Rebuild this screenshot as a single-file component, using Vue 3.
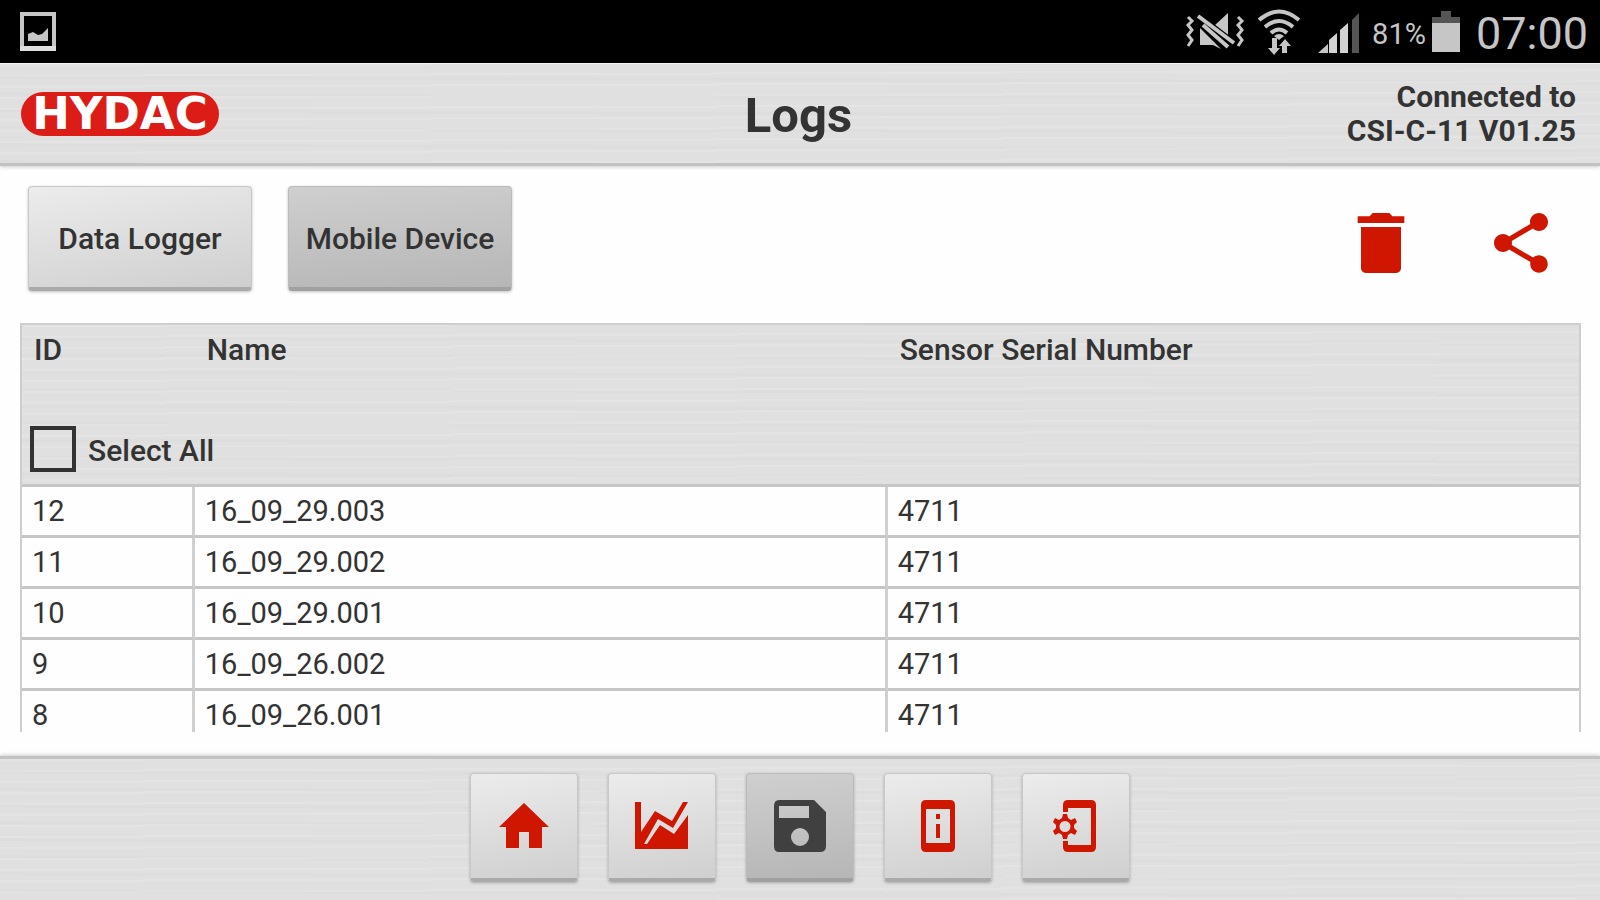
<template>
  <div class="app">
    <div class="status-bar">
      <svg class="status-photo" width="36" height="40" viewBox="0 0 36 40">
        <rect x="2" y="2" width="32" height="35" fill="none" stroke="#c6c6c6" stroke-width="4" />
        <path d="M0 34h36v5H0z" fill="#dedede" />
        <path d="M8 22l5-2 5 3 4-1 6-6v13H8z" fill="#c6c6c6" />
      </svg>
      <div class="status-right">
        <svg class="status-mute" width="60" height="40" viewBox="0 0 60 40">
          <g fill="none" stroke="#c6c6c6" stroke-width="3">
            <path d="M2 5l4 4-4 4 4 5-4 5 4 5-4 6" />
            <path d="M52 5l4 4-4 4 4 5-4 5 4 5-4 6" />
          </g>
          <path d="M14 16l21 21V37L27 33H14zM29 13L42 1v24z" fill="#c6c6c6" />
          <path d="M12 5l37 28" stroke="#000" stroke-width="8" />
          <path d="M12 4l36 27M17 13l25 22" stroke="#c6c6c6" stroke-width="4" />
        </svg>
        <svg class="status-wifi" width="42" height="46" viewBox="0 0 42 46">
          <g fill="none" stroke="#c6c6c6" stroke-width="4">
            <path d="M1 11Q21-6 41 11" />
            <path d="M7 18Q21 6 35 18" />
            <path d="M13 24Q21 17 29 24" />
          </g>
          <path d="M16 27q5-4 10 0l-5 4z" fill="#c6c6c6" />
          <path d="M14 29h5v10h3l-6 7-6-7h4zM24 44V37h-3l6-7 6 7h-4v7z" fill="#c6c6c6" />
        </svg>
        <svg class="status-signal" width="42" height="42" viewBox="0 0 42 42">
          <path d="M0 40l10-9v9z" fill="#c6c6c6" />
          <path d="M11 27l8-7v20h-8zM22 17l8-7v30h-8z" fill="#d2d2d2" />
          <path d="M34 7l7-7v40h-7z" fill="#555" />
        </svg>
        <span class="status-percent">81%</span>
        <svg class="status-battery" width="28" height="42" viewBox="0 0 28 42">
          <path d="M9 0h10v6h9v7H0V6h9z" fill="#555" />
          <path d="M0 12h28v29H0z" fill="#c6c6c6" />
        </svg>
        <span class="status-time">07:00</span>
      </div>
    </div>

    <header class="header metal">
      <div class="header-side">
        <div class="logo">HYDAC</div>
      </div>
      <h1 class="title">Logs</h1>
      <div class="header-side connection">
        Connected to<br />
        CSI-C-11 V01.25
      </div>
    </header>

    <main class="content">
      <div class="toolbar">
        <button
          v-for="source in sources"
          :key="source"
          type="button"
          class="btn source-btn"
          :class="{ active: source === activeSource }"
          @click="activeSource = source"
        >
          {{ source }}
        </button>
        <div class="actions">
          <button type="button" class="icon-btn" aria-label="Delete">
            <svg width="80" height="80" viewBox="0 0 24 24">
              <path d="M6 19.6c0 .8.6 1.4 1.4 1.4h9.2c.8 0 1.4-.6 1.4-1.4V7.2H6zM19 4h-3.6l-.9-1h-5l-.9 1H5v2h14z" />
            </svg>
          </button>
          <button type="button" class="icon-btn" aria-label="Share">
            <svg width="72" height="72" viewBox="0 0 24 24">
              <path d="M18 16.08c-.76 0-1.44.3-1.96.77L8.91 12.7c.05-.23.09-.46.09-.7s-.04-.47-.09-.7l7.05-4.11c.54.5 1.25.81 2.04.81 1.66 0 3-1.34 3-3s-1.34-3-3-3-3 1.34-3 3c0 .24.04.47.09.7L8.04 9.81C7.5 9.31 6.79 9 6 9c-1.66 0-3 1.34-3 3s1.34 3 3 3c.79 0 1.5-.31 2.04-.81l7.12 4.16c-.05.21-.08.43-.08.65 0 1.61 1.31 2.92 2.92 2.92 1.61 0 2.92-1.31 2.92-2.92s-1.31-2.92-2.92-2.92z" />
            </svg>
          </button>
        </div>
      </div>

      <div class="table-wrap">
        <table class="log-table">
          <colgroup>
            <col class="col-id" />
            <col class="col-name" />
            <col class="col-serial" />
          </colgroup>
          <thead class="metal">
            <tr class="head-row">
              <th scope="col">ID</th>
              <th scope="col">Name</th>
              <th scope="col">Sensor Serial Number</th>
            </tr>
            <tr class="select-row">
              <th colspan="3">
                <label class="select-all">
                  <input v-model="selectAll" type="checkbox" />
                  <span>Select All</span>
                </label>
              </th>
            </tr>
          </thead>
          <tbody>
            <tr v-for="log in logs" :key="log.id">
              <td>{{ log.id }}</td>
              <td>{{ log.name }}</td>
              <td>{{ log.serial }}</td>
            </tr>
          </tbody>
        </table>
      </div>
    </main>

    <nav class="footer metal">
      <button
        v-for="tab in tabs"
        :key="tab.name"
        type="button"
        class="btn tab-btn"
        :class="{ active: tab.name === activeTab }"
        :aria-label="tab.name"
        @click="activeTab = tab.name"
      >
        <svg width="64" height="64" viewBox="0 0 64 64">
          <path :d="tab.icon" fill-rule="evenodd" />
        </svg>
      </button>
    </nav>
  </div>
</template>

<script setup>
import { ref } from 'vue'

const sources = ['Data Logger', 'Mobile Device']
const activeSource = ref('Mobile Device')
const activeTab = ref('Logs')
const selectAll = ref(false)

const logs = [
  { id: 12, name: '16_09_29.003', serial: '4711' },
  { id: 11, name: '16_09_29.002', serial: '4711' },
  { id: 10, name: '16_09_29.001', serial: '4711' },
  { id: 9, name: '16_09_26.002', serial: '4711' },
  { id: 8, name: '16_09_26.001', serial: '4711' }
]

const tabs = [
  {
    name: 'Home',
    icon: 'M32 9L57 33H50V54H37V38H27V54H14V33H7Z'
  },
  {
    name: 'Measurement',
    icon: 'M5 8H11V38L25 17L42 27L53 8H58L43 34L28 25L14 50H17L30 31L44 40L58 21V55H5Z'
  },
  {
    name: 'Logs',
    icon: 'M11 6H46L58 18V52Q58 58 52 58H11Q6 58 6 52V12Q6 6 11 6ZM11 12V24H41V12ZM32 34A9 9 0 1 0 32 52A9 9 0 1 0 32 34Z'
  },
  {
    name: 'Info',
    icon: 'M20 6H44Q49 6 49 11V53Q49 58 44 58H20Q15 58 15 53V11Q15 6 20 6ZM20 15V49H44V15ZM30 20H34V25H30ZM30 30H34V44H30Z'
  },
  {
    name: 'Settings',
    icon: 'M24 6H47Q52 6 52 11V53Q52 58 47 58H24Q19 58 19 53V47H24V51H47V14H24V18H19V11Q19 6 24 6ZM19 20H23L24 24L27 26L31 24L33 28L30 31V34L33 37L31 41L27 39L24 41L23 45H19L18 41L15 39L11 41L9 37L12 34V31L9 28L11 24L15 26L18 24ZM21 27A5 5 0 1 0 21 38A5 5 0 1 0 21 27Z'
  }
]
</script>

<style>
body {
  margin: 0;
}
</style>

<style scoped>
.app {
  display: flex;
  flex-direction: column;
  height: 100vh;
  overflow: hidden;
  background: #fefefe;
  color: #333;
  font-family: Roboto, 'Liberation Sans', sans-serif;
  font-size: 30px;
}

.metal {
  background-color: #e0e0e0;
  background-image:
    repeating-linear-gradient(179.8deg, rgba(255, 255, 255, 0.12) 0 2px, transparent 2px 11px),
    repeating-linear-gradient(180.2deg, rgba(0, 0, 0, 0.012) 0 3px, transparent 3px 17px);
}

.status-bar {
  display: flex;
  flex-shrink: 0;
  justify-content: space-between;
  align-items: center;
  height: 63px;
  padding: 0 12px 0 20px;
  background: #000;
  color: #c6c6c6;
}

.status-right {
  display: flex;
  align-items: center;
}

.status-wifi {
  margin-left: 12px;
}

.status-signal {
  margin: 4px 12px 0 18px;
}

.status-percent {
  padding-top: 4px;
  font-size: 29px;
}

.status-battery {
  margin: 0 16px 0 6px;
}

.status-time {
  padding-top: 4px;
  font-size: 45px;
  line-height: 52px;
}

.header {
  position: relative;
  display: flex;
  flex-shrink: 0;
  align-items: center;
  height: 99px;
  padding: 0 24px 0 21px;
  border-top: 1px solid #f4f4f4;
  border-bottom: 3px solid #c2c2c2;
  box-shadow: 0 1px 4px rgba(0, 0, 0, 0.2);
}

.header-side {
  flex: 1;
}

.logo {
  width: 198px;
  border-radius: 22px;
  background: #dc1d17;
  color: #fff;
  font-family: 'DejaVu Sans', sans-serif;
  font-size: 45px;
  line-height: 44px;
  font-weight: 700;
  text-align: center;
}

.title {
  margin: 0;
  padding-top: 4px;
  font-size: 49px;
  line-height: 56px;
  font-weight: 700;
}

.connection {
  text-align: right;
  font-weight: 700;
  line-height: 34px;
}

.content {
  display: flex;
  flex: 1;
  flex-direction: column;
  min-height: 0;
  padding: 20px 19px 24px 20px;
}

.toolbar {
  display: flex;
  flex-shrink: 0;
  align-items: flex-start;
  gap: 36px;
  height: 137px;
  padding-left: 8px;
}

.btn {
  border: 1px solid #c8c8c8;
  border-bottom: 4px solid #aaa;
  border-radius: 4px;
  background: linear-gradient(170deg, #ececec, #cfcfcf);
  box-shadow: 0 1px 3px rgba(0, 0, 0, 0.25);
  color: #333;
  font: inherit;
  cursor: pointer;
}

.btn.active {
  border-color: #bbb;
  border-bottom-color: #a0a0a0;
  background: linear-gradient(175deg, #cfcfcf, #b6b6b6);
}

.source-btn {
  width: 224px;
  height: 105px;
  padding: 2px 0 0;
  font-weight: 500;
}

.actions {
  display: flex;
  align-items: center;
  gap: 64px;
  margin-left: auto;
  padding: 17px 24px 0 0;
}

.icon-btn {
  padding: 0;
  border: 0;
  background: none;
  cursor: pointer;
}

.icon-btn svg {
  display: block;
  fill: #ce1600;
}

.table-wrap {
  flex: 1;
  min-height: 0;
  overflow: hidden;
}

.log-table {
  width: 100%;
  border: 2px solid #cecece;
  border-spacing: 0;
  table-layout: fixed;
}

.col-id {
  width: 11.1%;
}

.col-name {
  width: 44.5%;
}

.log-table th {
  padding: 0 12px;
  font-weight: 500;
  line-height: 34px;
  text-align: left;
}

.head-row th {
  height: 93px;
  padding-top: 8px;
  vertical-align: top;
}

.log-table .select-row th {
  height: 58px;
  padding: 0 8px;
  border-bottom: 3px solid #c6c6c6;
  vertical-align: top;
}

.select-all {
  display: flex;
  align-items: center;
  gap: 12px;
}

.select-all input {
  width: 46px;
  height: 46px;
  margin: 0;
  border: 4px solid #333;
  appearance: none;
}

.select-all input:checked {
  background: #ce1600;
  box-shadow: inset 0 0 0 6px #e0e0e0;
}

.select-all span {
  padding-top: 4px;
}

.log-table td {
  height: 48px;
  padding: 0 10px;
  border-bottom: 3px solid #c6c6c6;
  font-size: 29px;
  line-height: 34px;
}

.log-table td:not(:last-child) {
  border-right: 3px solid #d0d0d0;
}

.footer {
  display: flex;
  flex-shrink: 0;
  justify-content: center;
  gap: 30px;
  padding: 14px 0 18px;
  border-top: 3px solid #c2c2c2;
  box-shadow: 0 -1px 4px rgba(0, 0, 0, 0.2);
}

.tab-btn {
  display: flex;
  justify-content: center;
  align-items: center;
  width: 108px;
  height: 109px;
  padding: 0;
}

.tab-btn svg {
  fill: #ce1600;
}

.tab-btn.active svg {
  fill: #404040;
}
</style>
